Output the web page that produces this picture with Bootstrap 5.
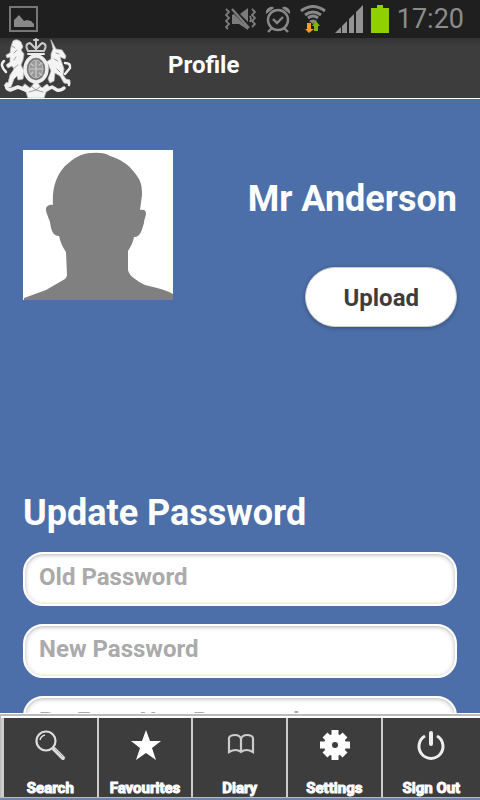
<!DOCTYPE html>
<html lang="en">
<head>
<meta charset="utf-8">
<meta name="viewport" content="width=device-width, initial-scale=1">
<title>Profile</title>
<link href="https://cdn.jsdelivr.net/npm/bootstrap@5.3.0/dist/css/bootstrap.min.css" rel="stylesheet">
<style>
body { font-family: Roboto, "Liberation Sans", sans-serif; background: #4c6fa9; color: #fff; }
svg { display: block; flex: none; }
.status-bar { height: 38px; background: #1f1f1f; color: #8c8c8c; padding: 0 16px 0 8px; flex: none; }
.status-icons { gap: 8px; }
.clock { font-size: 27px; line-height: 38px; }
.app-bar { background: linear-gradient(#333, #3d3d3d 8px); border-bottom: 1px solid #fff; height: 61px; flex: none; }
.app-title { font-size: 24px; line-height: 28px; font-weight: 700; padding-bottom: 6px; margin-left: 96px; }
.page-body { min-height: 0; padding: 51px 23px 0; }
.profile-row { margin-bottom: 164px; }
.big-text { font-size: 36px; line-height: 44px; font-weight: 700; }
.profile-name { margin: 27px 0 46px; }
.btn-upload { --bs-btn-color: #3d3d3d; --bs-btn-bg: #fff; --bs-btn-border-color: #ccc; --bs-btn-hover-bg: #eee; --bs-btn-hover-color: #3d3d3d;
  font-size: 24px; line-height: 34px; font-weight: 700; padding: 13px 37px 11px; box-shadow: 0 1px 4px rgba(0,0,0,.3); border-width: 1px; }
.field, .field:focus { font-size: 24px; line-height: 28px; font-weight: 700; color: #3d3d3d; background: #fff; border: 2px solid #fff; border-radius: 20px;
  padding: 9px 14px 13px; box-shadow: inset 0 1px 4px rgba(0,0,0,.3); }
.field::placeholder { color: #aaa; }
.fields { gap: 18px; margin-top: 17px; }
.tab-bar { flex: none; border-top: 1px solid #fff; padding-bottom: 2px; background: #6c84b4; }
.tabs { border: solid #bbb; border-width: 2px 0 1px 1px; background: #ccc; }
.tabs-inner { gap: 2px; padding-left: 3px; border-top: 2px solid #fff; }
.tab { background: #3d3d3d; color: #fff; font-size: 15px; line-height: 18px; font-weight: 700; height: 79px; padding-top: 11px; flex: 20 1 0; min-width: 0;
  -webkit-text-stroke: 1px #fff; }
.tab:last-child { flex-grow: 21; }
</style>
<script src="https://cdn.jsdelivr.net/npm/bootstrap@5.3.0/dist/js/bootstrap.bundle.min.js"></script>
</head>
<body class="vh-100 d-flex flex-column overflow-hidden">
<div class="status-bar d-flex align-items-center justify-content-between">
  <svg width="31" height="28" viewBox="0 0 31 28"><path fill="none" stroke="#777" stroke-width="2" d="M2 2h27v24H2z"/><path fill="#888" d="M6 22V15l5-5 5 6 3-1 4 1 3 3v3z"/></svg>
  <div class="status-icons d-flex align-items-center">
    <svg width="32" height="24" viewBox="0 0 32 24" fill="none" stroke="#7c7c7c" stroke-width="1.8"><path fill="#7c7c7c" stroke="none" d="M7 8l2-1 10 10 4 3v3l-9-6H7zM15 7l8-6v14z"/><path d="M7 2l17 19" stroke-width="2.4"/><path d="M1 2l3 3-3 3 3 3-3 3 3 3-3 3 2 2M27 2l3 3-3 3 3 3-3 3 3 3-3 3M25 9l1 3-1 3"/></svg>
    <svg width="26" height="28" viewBox="0 0 26 28" fill="none" stroke="#888" stroke-width="2.4"><circle cx="13" cy="15" r="10"/><path d="M8 14l4 4 6-6M7 23l-4 4M19 23l4 4"/><path fill="#888" stroke="none" d="M1 9Q0 4 5 2q3-1 4 1zM25 9Q26 4 21 2q-3-1-4 1z"/></svg>
    <svg width="28" height="28" viewBox="0 0 28 28" fill="none" stroke="#888" stroke-width="3"><path d="M2 6Q14-3 26 6M6 10q8-6 16 0M9 13q5-4 10 0"/><path fill="#888" stroke="none" d="M10 16q4-3 8 0l-4 3z"/><path fill="#ff9b28" stroke="none" d="M8 18h4v6h3l-5 4-4-4h2z"/><path fill="#7fb800" stroke="none" d="M15 26h4v-5h2l-4-5-4 5h2z"/></svg>
    <svg width="28" height="28" viewBox="0 0 28 28" fill="#939393"><path d="M0 28l6-6v6zM7 28v-7l5-5v12zM14 28V14l5-5v19zM21 28V7l7-7v28z"/></svg>
    <svg width="18" height="28" viewBox="0 0 18 28" fill="#91d000"><path d="M6 0h6v3h6v25H0V3h6z"/></svg>
    <span class="clock">17:20</span>
  </div>
</div>
<header class="app-bar d-flex align-items-center">
  <svg width="72" height="60" viewBox="0 0 72 60" fill="none" stroke="#eee" stroke-linecap="round" stroke-linejoin="round">
    <g fill="#f4f4f4" stroke="#bbb" stroke-width=".8">
      <path d="M13 3q4-3 8 1l2 5-2 3 3 4-1 6-2 5 3 6-1 8-5 1-1-4-3 3-3 8-5 1-2-3 4-2 2-8 4-6-2-3-4 2-2-3 4-3v-5l-3 1-1-3 4-2 1-6z"/>
      <path d="M51 2l5 9 6 1 4 6-1 3-5-2 2 6 2 6-1 6 3 4 4 1v4l-6-1-4-7-5-3-1 8-4 2-2-4 3-8-3-7-2-2 5-3v-5l2-5z"/>
      <path d="M25 46l5 4 6-7 6 7 5-4 4 5-5 3-2 6H28l-2-6-5-3z"/>
    </g>
    <path stroke-width="3.5" d="M7 46q-2 5 3 6l8-3 8 3M64 50q-3 3-7 2l-5-3-7 3"/>
    <path stroke-width="2.5" d="M6 34Q-1 27 4 23M65 25q6 0 5 5l-5 6M65 43q5 0 4 4"/>
    <path stroke="#ccc" stroke-width="2" d="M28 13q-4-7 2-8l6 6 6-6q6 1 2 8zM36 3v9M34 2h4M36 1v3"/>
    <path stroke-width="2" d="M28 16h16"/>
    <ellipse cx="36" cy="31" rx="11" ry="13" fill="#777" stroke-width="3.5"/>
    <ellipse cx="36" cy="31" rx="7" ry="9" fill="#999" stroke="#bbb" stroke-width="1"/>
    <path stroke="#ccc" stroke-width="1.2" d="M36 23v16M30 31h12M31 26l3 2M39 35l3 2M39 27l3-2M31 36l2-2"/>
    <path stroke="#888" stroke-width=".8" d="M12 8l3 2M17 12l-3 3M16 19l-2 3M18 27l-4 3M56 15l3 1M54 21l4 2M57 31l3 3M29 54l7-2 7 2M31 48l5 4 5-4"/>
  </svg>
  <h1 class="app-title mb-0">Profile</h1>
</header>
<main class="page-body flex-fill overflow-hidden">
  <section class="profile-row d-flex justify-content-between align-items-start">
    <svg width="150" height="150" viewBox="0 0 150 150" role="img" aria-label="Profile photo"><path fill="#fff" d="M0 0h150v150H0z"/><path fill="#808080" d="M1 150v-2l22-8 19-11q2-2 2-4l-1-23q-5-7-7-16c-6 0-8-6-9-14-2-6-4-9-4-13 0-3 4-5 7-4C29 40 32 27 42 16 51 8 59 3 68 3q13-1 19 3c10 3 18 8 24 16 7 9 8 12 8 23l-2 15c3-1 6 0 6 3 0 4-2 6-2 10-2 6-3 14-10 14q-1 6-6 14v19q1 5 7 9 8 6 14 7 15 3 24 8v6z"/></svg>
    <div class="d-flex flex-column align-items-end">
      <h2 class="big-text profile-name">Mr Anderson</h2>
      <button type="button" class="btn btn-upload rounded-pill">Upload</button>
    </div>
  </section>
  <form>
    <h2 class="big-text mb-0">Update Password</h2>
    <div class="fields d-flex flex-column">
      <input type="password" class="form-control field" placeholder="Old Password" aria-label="Old Password">
      <input type="password" class="form-control field" placeholder="New Password" aria-label="New Password">
      <input type="password" class="form-control field" placeholder="Re-Enter New Password" aria-label="Re-Enter New Password">
    </div>
  </form>
</main>
<nav class="tab-bar" aria-label="Main">
  <div class="tabs"><div class="tabs-inner d-flex">
    <a href="#" class="tab d-flex flex-column align-items-center justify-content-between text-decoration-none">
      <svg width="32" height="32" viewBox="0 0 32 32" fill="none" stroke="#ddd"><circle cx="12" cy="12" r="9.5" stroke-width="2.2"/><path stroke-width="1.5" d="M6 11q1-4 5-5"/><path stroke-width="4" stroke-linecap="round" d="M20 20l9 9"/><path stroke="#aaa" stroke-width="1" d="M21 20l8 8"/></svg>Search</a>
    <a href="#" class="tab d-flex flex-column align-items-center justify-content-between text-decoration-none">
      <svg width="32" height="32" viewBox="0 0 32 32" fill="#fff"><path d="M17 1l4 11h11l-9 7 4 12-10-7-10 7 4-12-9-7h11z"/></svg>Favourites</a>
    <a href="#" class="tab d-flex flex-column align-items-center justify-content-between text-decoration-none">
      <svg width="32" height="32" viewBox="0 0 32 32" fill="none" stroke="#ccc" stroke-width="2.2"><path d="M17 23V10q-1-4-6-4T5 9v14q7-4 12 0 5-4 12 0V9q-1-3-6-3t-6 4"/></svg>Diary</a>
    <a href="#" class="tab d-flex flex-column align-items-center justify-content-between text-decoration-none">
      <svg width="32" height="32" viewBox="0 0 32 32"><g stroke="#fff" stroke-width="7"><path d="M17 1v30M2 16h30M7 6l20 20M27 6L7 26"/></g><circle cx="17" cy="16" r="11" fill="#fff"/><circle cx="17" cy="16" r="3" fill="#3d3d3d"/></svg>Settings</a>
    <a href="#" class="tab d-flex flex-column align-items-center justify-content-between text-decoration-none">
      <svg width="32" height="32" viewBox="0 0 32 32" fill="none" stroke="#eee" stroke-width="3"><path d="M10 7a12 12 0 1 0 12 0"/><path stroke-width="4" stroke-linecap="round" d="M16 4v11"/></svg>Sign Out</a>
  </div></div>
</nav>
</body>
</html>
